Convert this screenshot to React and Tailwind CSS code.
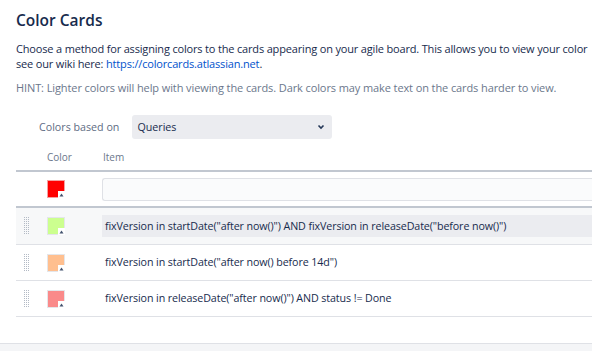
const ROWS = [
  { color: '#ccff8f', query: 'fixVersion in startDate("after now()") AND fixVersion in releaseDate("before now()")', active: true },
  { color: '#ffbf8f', query: 'fixVersion in startDate("after now() before 14d")' },
  { color: '#fa8a8a', query: 'fixVersion in releaseDate("after now()") AND status != Done' },
]

function Swatch({ color, edge = '#e4e6ea' }) {
  return (
    <div className="relative w-[18px] h-[18px] border" style={{ backgroundColor: color, borderColor: edge }}>
      <svg className="absolute -right-[1px] -bottom-[1px]" width="7" height="7" viewBox="0 0 7 7">
        <rect width="7" height="7" fill="#fff" />
        <path d="M1.5 5.5 L3.5 2.5 L5.5 5.5 Z" fill="#42526e" />
      </svg>
    </div>
  )
}

function Grip() {
  return (
    <svg width="6" height="18" viewBox="0 0 6 18">
      {[0, 1, 2, 3, 4, 5, 6, 7, 8].map((r) =>
        [0, 1, 2].map((c) => (
          <rect key={r + '-' + c} x={c * 2} y={r * 2} width="1" height="1" fill="#b3bac5" />
        ))
      )}
    </svg>
  )
}

export default function App() {
  return (
    <div className="w-[592px] h-[351px] overflow-hidden bg-white text-[#172b4d] font-['Open_Sans',sans-serif] flex flex-col">
      <div className="flex-1 pl-4">
        <h1 className="pt-[9px] text-[15.5px] leading-[22px] font-semibold whitespace-nowrap">Color Cards</h1>
        <p className="mt-[10px] text-[11px] leading-[15px] whitespace-nowrap tracking-[-0.17px]">
          Choose a method for assigning colors to the cards appearing on your agile board. This allows you to view your color
          <br />
          see our wiki here: <span className="text-[#0052cc]">https://colorcards.atlassian.net</span>.
        </p>
        <p className="mt-[9px] text-[11px] leading-[15px] text-[#6b778c] whitespace-nowrap tracking-[-0.1px]">
          HINT: Lighter colors will help with viewing the cards. Dark colors may make text on the cards harder to view.
        </p>

        <div className="mt-[20px] flex items-center pl-[23px] gap-[13px]">
          <span className="text-[10.7px] text-[#5e6c84]">Colors based on</span>
          <div className="w-[200px] h-[24px] rounded-[3px] bg-[#ebecf0] flex items-center justify-between pl-[5px] pr-[6px]">
            <span className="text-[10.7px]">Queries</span>
            <svg width="10" height="10" viewBox="0 0 10 10">
              <path d="M2.5 3.5 L5 6 L7.5 3.5" fill="none" stroke="#253858" strokeWidth="1.6" />
            </svg>
          </div>
        </div>

        <div className="mt-[8px] flex h-[20px] items-center text-[10px] text-[#6b778c]">
          <span className="pl-[31px] w-[87px]">Color</span>
          <span>Item</span>
        </div>

        <div className="mt-[3px] border-t-2 border-b-2 border-[#c1c7d0] h-[38px] flex items-center">
          <div className="pl-[31px] w-[86px]">
            <Swatch color="#ff0000" edge="#f4a0a0" />
          </div>
          <div className="flex-1 h-[23px] border border-[#dfe1e6] border-r-0 rounded-l-[3px] bg-[#fafbfc]" />
        </div>

        {ROWS.map((row, i) => (
          <div
            key={i}
            className={`flex items-center border-b border-[#dfe1e6] ${row.active ? 'h-[37px] bg-[#f7f8f9]' : 'h-[36px]'}`}
          >
            <div className="pl-[8px] w-[31px]">
              <Grip />
            </div>
            <div className="w-[55px]">
              <Swatch color={row.color} />
            </div>
            <div
              className={`flex-1 h-[22px] flex items-center pl-[3px] text-[10.7px] tracking-[-0.1px] whitespace-nowrap ${row.active ? 'bg-[#ebecf0]' : ''}`}
            >
              {row.query}
            </div>
          </div>
        ))}
      </div>
      <div className="h-[8px] border-t border-[#dfe1e6] bg-[#f4f5f7]" />
    </div>
  )
}
